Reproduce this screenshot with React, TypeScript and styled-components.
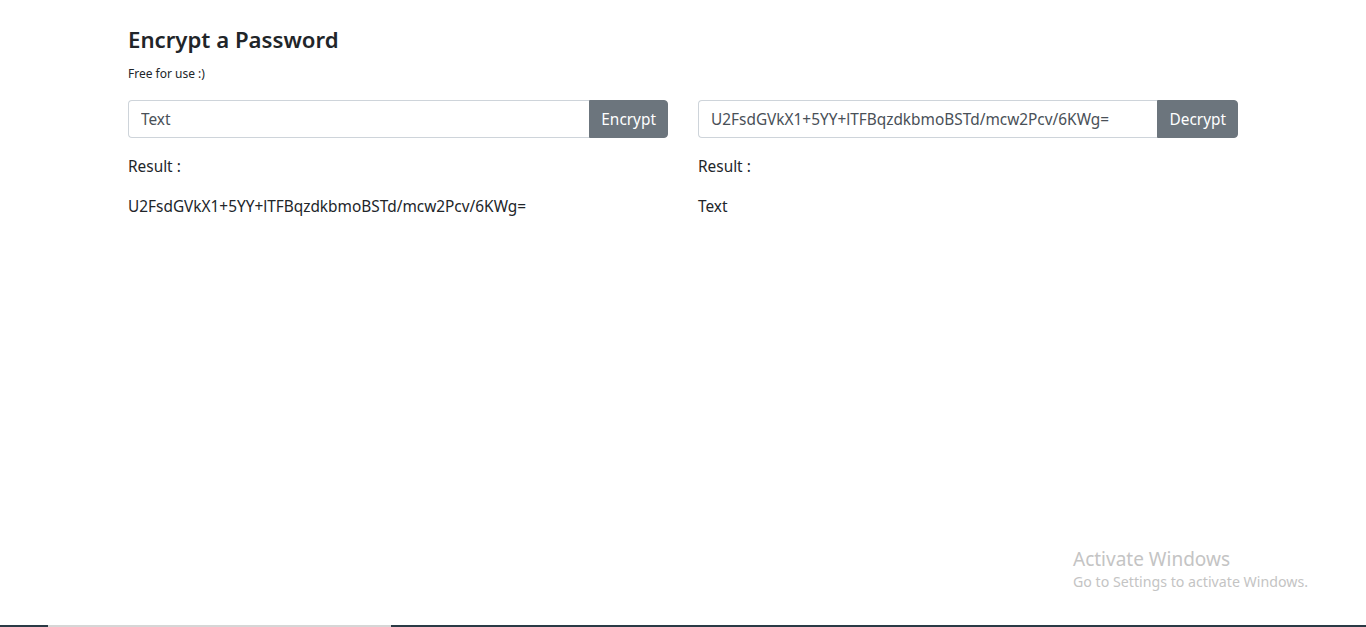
import React from "react";
import styled, { createGlobalStyle } from "styled-components";

const Global = createGlobalStyle`
  html, body { margin: 0; padding: 0; background: #fff; }
  body {
    font-family: "Noto Sans", "Open Sans", sans-serif;
    color: #212529;
    font-size: 16px;
    line-height: 1.5;
    height: 627px;
    overflow: hidden;
  }
  * { box-sizing: border-box; }
`;

const Page = styled.div`
  position: relative;
  height: 627px;
  display: flex;
  flex-direction: column;
`;

const Container = styled.main`
  width: 1140px;
  margin: 0 auto;
  padding: 23px 15px 0;
  flex: 1;
`;

const Title = styled.h3`
  margin: 0 0 9px;
  font-size: 22.2px;
  font-weight: 600;
  line-height: 1.5;
  color: #212529;
`;

const Sub = styled.small`
  display: block;
  font-size: 12px;
  margin-bottom: 17px;
`;

const Row = styled.div`
  display: grid;
  grid-template-columns: 1fr 1fr;
  column-gap: 30px;
`;

const Col = styled.section`
  display: flex;
  flex-direction: column;
`;

const InputGroup = styled.div`
  display: flex;
  height: 38px;
`;

const Input = styled.input`
  flex: 1;
  min-width: 0;
  height: 38px;
  padding: 6px 12px;
  font: inherit;
  font-size: 15.4px;
  color: #495057;
  border: 1px solid #ced4da;
  border-right: none;
  border-radius: 4px 0 0 4px;
  outline: none;
`;

const Button = styled.button`
  height: 38px;
  padding: 0 11px;
  font: inherit;
  font-size: 15.4px;
  color: #fff;
  background: #6c757d;
  border: 1px solid #6c757d;
  border-radius: 0 4px 4px 0;
`;

const Label = styled.p`
  margin: 17px 0 0;
  font-size: 15.4px;
`;

const Output = styled.p`
  margin: 17px 0 0;
  font-size: 15.4px;
`;

const Watermark = styled.div`
  position: absolute;
  left: 1073px;
  top: 548px;
  color: #c4c4c4;
  font-family: "Noto Sans", sans-serif;
  line-height: 1.2;
`;

const WmTitle = styled.div`
  font-size: 19px;
`;

const WmSub = styled.div`
  font-size: 14.2px;
  margin-top: 2px;
`;

const Taskbar = styled.div`
  display: flex;
  height: 2px;
`;

const TaskSeg = styled.div<{ $w?: number; $light?: boolean }>`
  flex: ${(p) => (p.$w ? `0 0 ${p.$w}px` : "1")};
  background: ${(p) => (p.$light ? "#d6d6d6" : "#2a3a45")};
`;

const cipher = "U2FsdGVkX1+5YY+lTFBqzdkbmoBSTd/mcw2Pcv/6KWg=";

export default function App() {
  return (
    <Page>
      <Global />
      <Container>
        <Title>Encrypt a Password</Title>
        <Sub>Free for use :)</Sub>
        <Row>
          <Col>
            <InputGroup>
              <Input defaultValue="Text" />
              <Button>Encrypt</Button>
            </InputGroup>
            <Label>Result :</Label>
            <Output>{cipher}</Output>
          </Col>
          <Col>
            <InputGroup>
              <Input defaultValue={cipher} />
              <Button>Decrypt</Button>
            </InputGroup>
            <Label>Result :</Label>
            <Output>Text</Output>
          </Col>
        </Row>
      </Container>
      <Watermark>
        <WmTitle>Activate Windows</WmTitle>
        <WmSub>Go to Settings to activate Windows.</WmSub>
      </Watermark>
      <Taskbar>
        <TaskSeg $w={48} />
        <TaskSeg $w={343} $light />
        <TaskSeg />
      </Taskbar>
    </Page>
  );
}
